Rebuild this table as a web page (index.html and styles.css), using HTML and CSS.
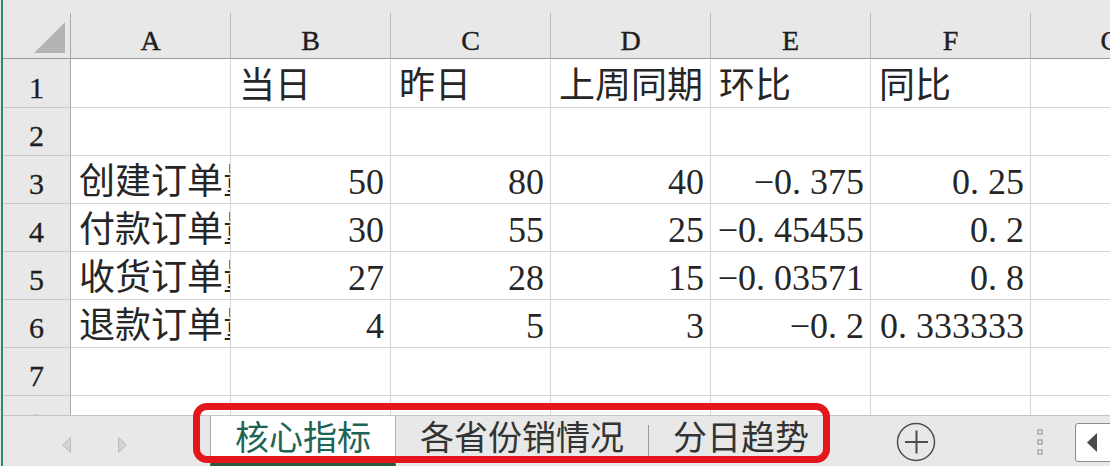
FILE: index.html
```html
<!DOCTYPE html>
<html lang="zh-CN">
<head>
<meta charset="utf-8">
<title>核心指标</title>
<link rel="stylesheet" href="styles.css">
</head>
<body>
<div class="sheet">
  <div class="top"></div>
  <div class="grid-wrap">
    <div class="grid">
      <div class="corner"><svg width="31" height="31" viewBox="0 0 31 31"><path d="M31 0V31H0Z" fill="#b4b4b4"/></svg></div>
      <div class="ch"><span>A</span></div>
      <div class="ch"><span>B</span></div>
      <div class="ch"><span>C</span></div>
      <div class="ch"><span>D</span></div>
      <div class="ch"><span>E</span></div>
      <div class="ch"><span>F</span></div>
      <div class="ch"><span>G</span></div>

      <div class="rh"><span>1</span></div>
      <div class="c"></div>
      <div class="c"><span>当日</span></div>
      <div class="c"><span>昨日</span></div>
      <div class="c"><span>上周同期</span></div>
      <div class="c"><span>环比</span></div>
      <div class="c"><span>同比</span></div>
      <div class="c"></div>

      <div class="rh"><span>2</span></div>
      <div class="c"></div><div class="c"></div><div class="c"></div><div class="c"></div><div class="c"></div><div class="c"></div><div class="c"></div>

      <div class="rh"><span>3</span></div>
      <div class="c"><span>创建订单量</span></div>
      <div class="c num"><span>50</span></div>
      <div class="c num"><span>80</span></div>
      <div class="c num"><span>40</span></div>
      <div class="c num"><span>−0<span class="pt">.</span>375</span></div>
      <div class="c num"><span>0<span class="pt">.</span>25</span></div>
      <div class="c"></div>

      <div class="rh"><span>4</span></div>
      <div class="c"><span>付款订单量</span></div>
      <div class="c num"><span>30</span></div>
      <div class="c num"><span>55</span></div>
      <div class="c num"><span>25</span></div>
      <div class="c num"><span>−0<span class="pt">.</span>45455</span></div>
      <div class="c num"><span>0<span class="pt">.</span>2</span></div>
      <div class="c"></div>

      <div class="rh"><span>5</span></div>
      <div class="c"><span>收货订单量</span></div>
      <div class="c num"><span>27</span></div>
      <div class="c num"><span>28</span></div>
      <div class="c num"><span>15</span></div>
      <div class="c num"><span>−0<span class="pt">.</span>03571</span></div>
      <div class="c num"><span>0<span class="pt">.</span>8</span></div>
      <div class="c"></div>

      <div class="rh"><span>6</span></div>
      <div class="c"><span>退款订单量</span></div>
      <div class="c num"><span>4</span></div>
      <div class="c num"><span>5</span></div>
      <div class="c num"><span>3</span></div>
      <div class="c num"><span>−0<span class="pt">.</span>2</span></div>
      <div class="c num"><span>0<span class="pt">.</span>333333</span></div>
      <div class="c"></div>

      <div class="rh"><span>7</span></div>
      <div class="c"></div><div class="c"></div><div class="c"></div><div class="c"></div><div class="c"></div><div class="c"></div><div class="c"></div>

      <div class="rh"><span>8</span></div>
      <div class="c"></div><div class="c"></div><div class="c"></div><div class="c"></div><div class="c"></div><div class="c"></div><div class="c"></div>
    </div>
  </div>
  <div class="tabbar">
    <div class="nav">
      <svg width="9" height="16" viewBox="0 0 9 16"><path d="M8.5 0.5V15.5L0.5 8Z" fill="#d3d3d3" stroke="#bcbcbc"/></svg>
      <svg width="9" height="16" viewBox="0 0 9 16"><path d="M0.5 0.5V15.5L8.5 8Z" fill="#d3d3d3" stroke="#bcbcbc"/></svg>
    </div>
    <div class="tabs">
      <div class="tab active">核心指标</div>
      <div class="tab">各省份销情况</div>
      <span class="sep"></span>
      <div class="tab">分日趋势</div>
    </div>
    <svg class="add" width="40" height="40" viewBox="0 0 40 40"><circle cx="20" cy="20" r="18.5" fill="none" stroke="#4d4d4d" stroke-width="1.5"/><path d="M9 20H32M20.5 8.5V31.5" stroke="#4d4d4d" stroke-width="2"/></svg>
    <svg class="dots" width="8" height="28" viewBox="0 0 8 28"><rect x="2" y="2" width="4" height="4" fill="#eeeeee" stroke="#8a8a8a"/><rect x="2" y="12" width="4" height="4" fill="#eeeeee" stroke="#8a8a8a"/><rect x="2" y="22" width="4" height="4" fill="#eeeeee" stroke="#8a8a8a"/></svg>
    <div class="hscroll"><svg width="10" height="19" viewBox="0 0 10 19"><path d="M10 0V19L0 9.5Z" fill="#4a4a4a"/></svg></div>
  </div>
</div>
<div class="callout"></div>
</body>
</html>
```
FILE: styles.css
```css
html, body {
  margin: 0;
  padding: 0;
}
body {
  width: 1110px;
  height: 466px;
  overflow: hidden;
  background: #e8e8e8;
  position: relative;
}
.sheet {
  margin-left: 1px;
  border-left: 2px solid #2e8b67;
  height: 466px;
  display: flex;
  flex-direction: column;
  overflow: hidden;
}
.top {
  height: 13px;
  flex: none;
  background: #e8e8e8;
}
.grid-wrap {
  height: 402px;
  flex: none;
  overflow: hidden;
}
.grid {
  display: grid;
  grid-template-columns: 68px repeat(7, 160px);
  grid-template-rows: 46px 49px repeat(7, 48px);
  width: 1188px;
}
.grid > div {
  box-sizing: border-box;
  display: flex;
  align-items: flex-end;
  overflow: hidden;
  white-space: nowrap;
}
.corner {
  background: #e8e8e8;
  border-right: 1px solid #a8a8a8;
  border-bottom: 1px solid #9c9c9c;
  justify-content: flex-end;
  padding: 0 5px 5px 0;
}
.corner svg {
  display: block;
}
.ch {
  background: #e8e8e8;
  border-right: 1px solid #bdbdbd;
  border-bottom: 1px solid #9c9c9c;
  justify-content: center;
  font-family: "Liberation Serif", serif;
  font-size: 28px;
  line-height: 35px;
  color: #1e1e1e;
  -webkit-text-stroke: 0.4px #1e1e1e;
}
.rh {
  background: #e8e8e8;
  border-right: 1px solid #a8a8a8;
  border-bottom: 1px solid #cacaca;
  justify-content: center;
  font-family: "Liberation Serif", serif;
  font-size: 30px;
  line-height: 38px;
  color: #1e1e1e;
  -webkit-text-stroke: 0.3px #1e1e1e;
}
.c {
  background: #ffffff;
  border-right: 1px solid #d6d6d6;
  border-bottom: 1px solid #d6d6d6;
  padding: 0 6px 1px 8px;
  font-family: "Liberation Serif", "Noto Sans CJK SC", serif;
  font-size: 36px;
  line-height: 40px;
  color: #262626;
  justify-content: flex-start;
}
.c.num {
  justify-content: flex-end;
}
.pt {
  margin-right: 0.25em;
}
.tabbar {
  flex: 1;
  box-sizing: border-box;
  border-top: 1px solid #c4c4c4;
  background: #e8e8e8;
  display: flex;
  align-items: flex-start;
}
.nav {
  flex: none;
  width: 207px;
  box-sizing: border-box;
  padding: 21px 0 0 59px;
  display: flex;
  gap: 47px;
}
.nav svg {
  display: block;
}
.tabs {
  flex: none;
  width: 686px;
  display: flex;
  align-items: flex-start;
}
.tab {
  box-sizing: border-box;
  height: 50px;
  padding: 0 24px;
  border-bottom: 4px solid transparent;
  font-family: "Noto Sans CJK SC", sans-serif;
  font-size: 34px;
  line-height: 39px;
  color: #333333;
  white-space: nowrap;
}
.tab.active {
  background: #ffffff;
  color: #1d6454;
  border-left: 1px solid #a9a9a9;
  border-right: 1px solid #b5b5b5;
  border-bottom: 4px solid #2b5a3e;
}
.sep {
  flex: none;
  width: 1px;
  height: 31px;
  margin-top: 9px;
  background: #9a9a9a;
}
.add {
  flex: none;
  display: block;
  margin-top: 6px;
}
.dots {
  flex: none;
  display: block;
  margin: 12px 0 0 100px;
}
.hscroll {
  flex: none;
  box-sizing: border-box;
  width: 40px;
  height: 39px;
  margin: 7px 0 0 31px;
  background: #ffffff;
  border: 1px solid #8c8c8c;
  border-radius: 3px;
  display: flex;
  align-items: center;
  padding-left: 11px;
}
.hscroll svg {
  display: block;
}
.callout {
  position: absolute;
  left: 193px;
  top: 403px;
  width: 637px;
  height: 60px;
  box-sizing: border-box;
  border: 7px solid #e5151c;
  border-radius: 14px;
  pointer-events: none;
}
```
